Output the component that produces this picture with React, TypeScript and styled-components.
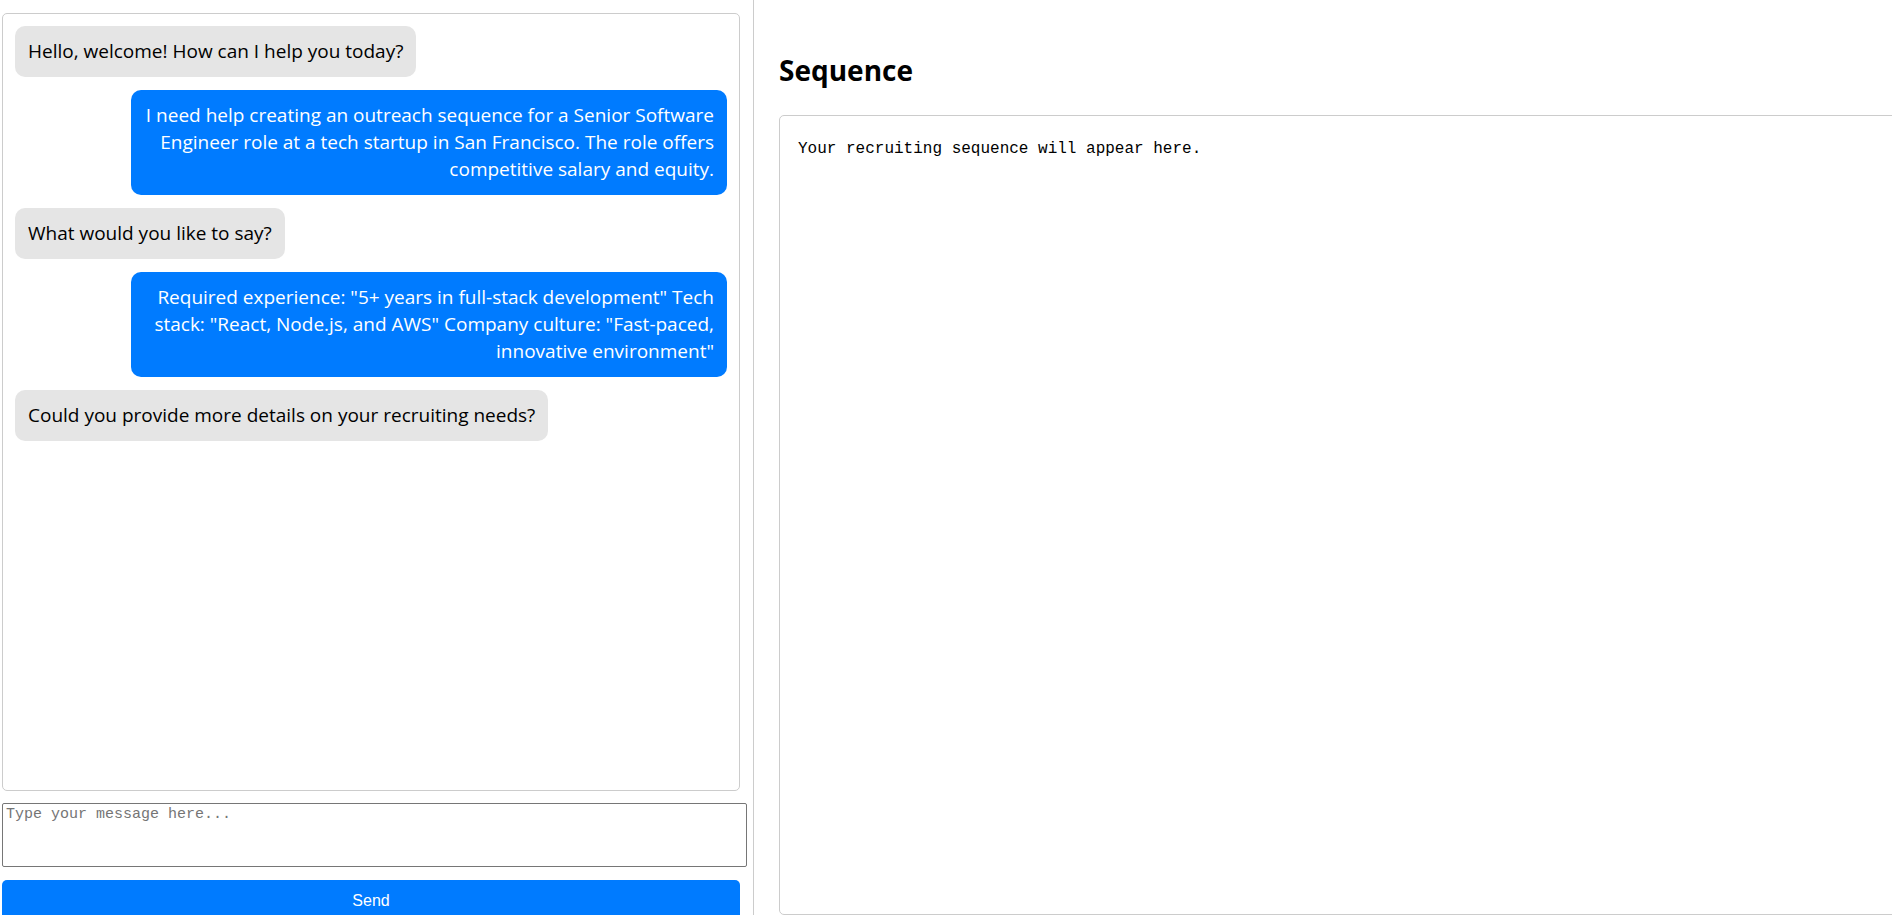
import * as React from 'react'
import styled, { createGlobalStyle } from 'styled-components'

interface Message {
    from: 'bot' | 'user',
    text: string
}

const messages: Message[] = [
    { from: 'bot', text: 'Hello, welcome! How can I help you today?' },
    { from: 'user', text: 'I need help creating an outreach sequence for a Senior Software Engineer role at a tech startup in San Francisco. The role offers competitive salary and equity.' },
    { from: 'bot', text: 'What would you like to say?' },
    { from: 'user', text: 'Required experience: "5+ years in full-stack development" Tech stack: "React, Node.js, and AWS" Company culture: "Fast-paced, innovative environment"' },
    { from: 'bot', text: 'Could you provide more details on your recruiting needs?' },
]

const GlobalStyle = createGlobalStyle`
    html, body {
        margin: 0;
        padding: 0;
        overflow: hidden;
        background: #ffffff;
    }
    body {
        font-family: "Open Sans", "Noto Sans", sans-serif;
        color: #000;
    }
    * {
        box-sizing: border-box;
    }
`

const Page = styled.div`
    display: flex;
    height: 100vh;
    overflow-x: scroll;
    overflow-y: hidden;

    &::-webkit-scrollbar {
        height: 13px;
    }
    &::-webkit-scrollbar-track {
        background: #eef3ea;
    }
    &::-webkit-scrollbar-thumb {
        background: #888888;
        border-bottom: 4px solid #eef3ea;
        border-radius: 0 6px 6px 0;
    }
`

const ChatColumn = styled.div`
    flex: 0 0 754px;
    display: flex;
    flex-direction: column;
    padding: 13px 6px 0 2px;
    border-right: 1px solid #cccccc;
`

const ChatBox = styled.div`
    width: 738px;
    height: 778px;
    flex-shrink: 0;
    display: flex;
    flex-direction: column;
    gap: 13px;
    padding: 12px 12px;
    border: 1px solid #cccccc;
    border-radius: 5px;
    overflow-y: auto;
`

const Bubble = styled.div<{ $mine: boolean }>`
    box-sizing: content-box;
    max-width: 80%;
    align-self: ${p => p.$mine ? 'flex-end' : 'flex-start'};
    padding: 12px 13px;
    border-radius: 10px;
    font-size: 19px;
    line-height: 27px;
    text-align: ${p => p.$mine ? 'right' : 'left'};
    background: ${p => p.$mine ? '#007bff' : '#e5e5e5'};
    color: ${p => p.$mine ? '#ffffff' : '#000000'};
`

const Input = styled.textarea`
    width: 745px;
    height: 64px;
    margin-top: 12px;
    flex-shrink: 0;
    padding: 2px 3px;
    border: 1px solid #767676;
    border-radius: 2px;
    resize: none;
    font-family: "Liberation Mono", monospace;
    font-size: 15px;

    &::placeholder {
        color: #757575;
    }
`

const SendButton = styled.button`
    width: 738px;
    height: 42px;
    margin-top: 13px;
    flex-shrink: 0;
    border: none;
    border-radius: 5px;
    background: #007bff;
    color: #ffffff;
    font-family: "Liberation Sans", Arial, sans-serif;
    font-size: 16px;
`

const SequenceColumn = styled.div`
    flex: 0 0 1147px;
    display: flex;
    flex-direction: column;
    padding-left: 25px;
`

const Heading = styled.h2`
    margin: 52px 0 0;
    font-size: 28px;
    font-weight: 700;
    line-height: 36px;
`

const SequenceBox = styled.pre`
    flex: 1;
    margin: 27px 0 0;
    padding: 24px 18px;
    border: 1px solid #cccccc;
    border-radius: 5px;
    font-family: "Liberation Mono", monospace;
    font-size: 16px;
    line-height: 19px;
    white-space: pre-wrap;
`

const App: React.FunctionComponent = (): React.ReactElement => {
    const [draft, setDraft] = React.useState<string>('')

    return (
        <Page>
            <GlobalStyle />
            <ChatColumn>
                <ChatBox>
                    {messages.map((m: Message, i: number) => (
                        <Bubble key={i.toString()} $mine={m.from === 'user'}>{m.text}</Bubble>
                    ))}
                </ChatBox>
                <Input
                    placeholder="Type your message here..."
                    value={draft}
                    onChange={e => setDraft(e.target.value)}
                />
                <SendButton>Send</SendButton>
            </ChatColumn>
            <SequenceColumn>
                <Heading>Sequence</Heading>
                <SequenceBox>Your recruiting sequence will appear here.</SequenceBox>
            </SequenceColumn>
        </Page>
    )
}

export default App
